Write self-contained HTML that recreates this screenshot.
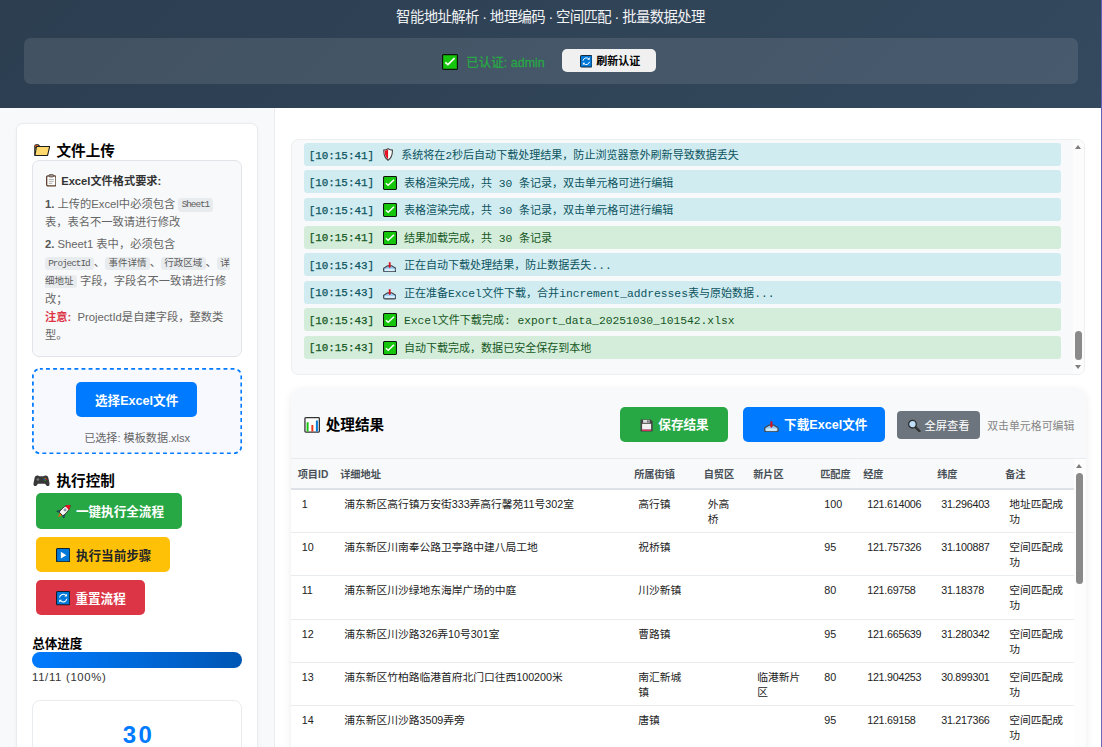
<!DOCTYPE html>
<html lang="zh-CN">
<head>
<meta charset="utf-8">
<title>智能地址解析</title>
<style>
*{box-sizing:border-box;margin:0;padding:0}
html,body{width:1102px;height:747px;overflow:hidden}
body{font-family:"Liberation Sans","Noto Sans CJK SC",sans-serif;background:linear-gradient(180deg,#6260ba,#7264b6);color:#333;position:relative}
.wrap{position:absolute;left:0;top:0;width:1100.8px;height:747px;background:#fff;overflow:hidden}
svg{display:inline-block;vertical-align:middle}
/* header */
.hdr{position:absolute;left:0;top:0;width:1101px;height:107.6px;background:linear-gradient(135deg,#2c3e50 0%,#34495e 100%);color:#fff}
.hdr .sub{position:absolute;left:0;width:1101px;top:7px;text-align:center;font-size:14.4px;line-height:20px;color:#f0f2f4;letter-spacing:-.6px}
.auth{position:absolute;left:24px;top:37.7px;width:1054px;height:46.4px;border-radius:6.5px;background:rgba(255,255,255,.1)}
.auth .ok{position:absolute;left:418px;top:16px}
.auth .txt{position:absolute;left:442.3px;top:16.3px;font-size:12.5px;line-height:18px;color:#28a745;white-space:nowrap;-webkit-text-stroke:.3px #28a745}
.auth .btn{position:absolute;left:537.6px;top:11.6px;width:94.8px;height:22.8px;border-radius:5px;background:#f0f0f0;color:#000;font-weight:bold;font-size:11px;line-height:24.8px;white-space:nowrap}
/* sidebar */
.side{position:absolute;left:0;top:108px;width:275px;height:639px;background:#f8f9fa;border-right:1px solid #e9ecef}
.card{position:absolute;left:16.4px;top:15.4px;width:242px;height:700px;background:#fff;border:1px solid #e9ecef;border-radius:7px;box-shadow:0 1px 4px rgba(0,0,0,.04)}
.h3{position:absolute;font-size:14.6px;font-weight:bold;color:#000;white-space:nowrap;line-height:20px}
.req{position:absolute;left:14px;top:35px;width:210.4px;height:197px;border:1px solid #e1e5ea;border-radius:7px;background:#f8f9fa;font-size:11.27px;color:#666;line-height:18.3px}
.req p{position:absolute;left:12px;white-space:nowrap}
.req b{color:#555}
.req code{font-family:"Liberation Mono","Noto Sans CJK SC",monospace;font-size:9.5px;background:#e9ecef;border-radius:3px;padding:.9px 3.3px 1.5px;color:#5c5c5c;position:relative;top:-.8px}
.req code.l{font-size:9.4px;letter-spacing:-1.04px;padding-right:4.3px}
.upl{position:absolute;left:14.2px;top:243px;width:210.2px;height:86.2px;padding:2px}
.upl .in{position:absolute;left:2px;top:2px;width:206.2px;height:82.2px}
.upl .b{position:absolute;left:41.8px;top:12px;width:121.4px;height:35px;border-radius:5px;background:#007bff;color:#fff;font-weight:bold;font-size:12.6px;line-height:39px;text-align:center;white-space:nowrap}
.upl .f{position:absolute;left:0;width:206px;top:59.6px;text-align:center;font-size:11.1px;line-height:16px;color:#666;white-space:nowrap}
.cb{position:absolute;left:18px;height:35.4px;border-radius:5px;color:#fff;font-weight:bold;font-size:12.6px;line-height:35.4px;white-space:nowrap}
.cb span{position:absolute;top:1.9px}
.pl{position:absolute;left:14.2px;top:510.4px;font-size:12.55px;font-weight:bold;color:#000;line-height:18px}
.pb{position:absolute;left:14.2px;top:526.8px;width:210.2px;height:16px;border-radius:8px;background:linear-gradient(90deg,#007bff,#0056b3)}
.pt{position:absolute;left:14px;top:543px;font-size:11.3px;line-height:18px;color:#333;letter-spacing:.7px}
.stat{position:absolute;left:14.4px;top:575px;width:210px;height:90px;border:1px solid #e9ecef;border-radius:8px;background:#fff;text-align:center}
.stat .n{position:absolute;left:0;width:208px;top:17.8px;font-size:24px;font-weight:bold;color:#007bff;line-height:32px;letter-spacing:2.4px;padding-left:2.4px}
/* main */
.logp{position:absolute;left:291.2px;top:139.2px;width:794.2px;height:235.4px;background:#f8f9fa;border:1px solid #eceff2;border-radius:7px;overflow:hidden}
.sb{position:absolute;background:#fcfcfc}
.sb i{position:absolute;display:block}
.sb .u{left:1.8px;width:0;height:0;border-left:3.8px solid transparent;border-right:3.8px solid transparent;border-bottom:4.2px solid #7d7d7d}
.sb .d{left:1.8px;width:0;height:0;border-left:3.8px solid transparent;border-right:3.8px solid transparent;border-top:4.2px solid #7d7d7d}
.sb .t{left:2.2px;width:7px;border-radius:3.5px;background:#8a8a8a}
.li{position:absolute;left:11.7px;width:757.5px;height:23px;border-radius:3px;background:#d1ecf1;color:#0c5460;font-family:"Liberation Mono","Noto Sans CJK SC",monospace;font-size:11px;line-height:22.8px;white-space:nowrap}
.li.s{background:#d4edda;color:#155724}
.li span{position:absolute;top:2.3px}
.li .ts{left:4.8px;font-size:10.9px;top:1.7px;-webkit-text-stroke:.25px currentColor}
.li .ic{left:78.8px}
.li .tx{font-size:11.04px}
.li i{font-style:normal;font-size:11.3px}
.res{position:absolute;left:291.2px;top:389.3px;width:794.4px;height:380px;background:#fff;border-radius:10px;box-shadow:0 1px 8px rgba(0,0,0,.08);overflow:hidden}
.rh{position:absolute;left:0;top:0;width:796px;height:69.9px;background:#f8f9fa;border-bottom:1px solid #e9ecef}
.rb{position:absolute;top:16.6px;height:35.3px;border-radius:5px;color:#fff;font-weight:bold;font-size:12.6px;line-height:35.3px;white-space:nowrap}
.rb span{position:absolute;top:.7px}
table{position:absolute;left:0;top:69.9px;width:782.6px;border-collapse:collapse;table-layout:fixed;font-size:10.75px;color:#222}
th{height:29.4px;background:#f8f9fa;border-bottom:2px solid #dee2e6;text-align:left;font-weight:bold;font-size:10.2px;color:#495057;padding:0 0 0 6.5px;white-space:nowrap}
td{height:43.2px;border-bottom:1px solid #e9ecef;vertical-align:top;padding:7px 6px 0 10.5px;line-height:15px}
.r1 td{height:44.2px}
.n{letter-spacing:-.27px}
</style>
</head>
<body>
<div class="wrap">
<div class="hdr">
  <div class="sub">智能地址解析 · 地理编码 · 空间匹配 · 批量数据处理</div>
  <div class="auth">
    <svg width="16" height="16" viewBox="0 0 16 16" style="position:absolute;left:418px;top:16px"><rect x=".6" y=".6" width="14.8" height="14.8" rx="1" fill="#16c60c" stroke="#0d160d" stroke-width="1.2"/><path d="M3.3 8.3 5.9 10.6 12.6 4.2" fill="none" stroke="#fff" stroke-width="1.7"/></svg><span class="txt">已认证: admin</span>
    <div class="btn"><svg width="12.5" height="12.5" viewBox="0 0 16 16" style="position:absolute;left:18.4px;top:6.1px"><rect x=".6" y=".6" width="14.8" height="14.8" rx="1" fill="#0078d7" stroke="#10202e" stroke-width="1.2"/><path d="M3.9 7.3a4.2 4.2 0 0 1 7.3-2.2" fill="none" stroke="#fff" stroke-width="1.25"/><path d="M12.4 3v3.1H9.3z" fill="#fff"/><path d="M12.1 8.7a4.2 4.2 0 0 1-7.3 2.2" fill="none" stroke="#fff" stroke-width="1.25"/><path d="M3.6 13V9.9h3.1z" fill="#fff"/></svg><span style="position:absolute;left:34.6px">刷新认证</span></div>
  </div>
</div>
<div class="side">
  <div class="card"><div style="position:absolute;left:.6px;top:.6px;width:240px;height:700px">
    <svg width="16.4" height="12.4" viewBox="0 0 16.6 12.5" style="position:absolute;left:16.1px;top:19.5px"><path d="M.8 11.5V2.1Q.8 .8 2.1 .8H4.3L5.6 2.2V4H1.2" fill="#efa92f" stroke="#1c1c1c" stroke-width="1.1" stroke-linejoin="round"/><path d="M1.5 1.3h2.2l-2.2 1.6z" fill="#e8342a"/><path d="M.9 11.7 2.5 2.5H15.9L13.7 11.7z" fill="#ffd86e" stroke="#1c1c1c" stroke-width="1.1" stroke-linejoin="round"/></svg><div class="h3" style="left:38.5px;top:16px">文件上传</div>
    <div class="req">
      <svg width="10.6" height="12.7" viewBox="0 0 11 13" style="position:absolute;left:12.8px;top:13.5px"><rect x=".7" y="1.9" width="9.6" height="10.4" rx="1.2" fill="#fdfdfd" stroke="#5a3d2b" stroke-width="1.3"/><rect x="3.2" y=".5" width="4.6" height="2.5" rx=".9" fill="#9a9a9a" stroke="#5a3d2b" stroke-width=".8"/><path d="M2.9 5.6H8.1M2.9 7.6H8.1M2.9 9.6H6.5" stroke="#9a9a9a" stroke-width=".8"/></svg><p style="top:10.6px;color:#333;font-weight:bold;left:28.2px;font-size:11.2px;margin-top:.5px">Excel文件格式要求:</p>
      <p style="top:34.1px"><b>1.</b> 上传的Excel中必须包含 <code class="l">Sheet1</code></p>
      <p style="top:52.4px">表，表名不一致请进行修改</p>
      <p style="top:74.1px"><b>2.</b> Sheet1 表中，必须包含</p>
      <p style="top:92.4px"><code class="l">ProjectId</code>、<code>事件详情</code>、<code>行政区域</code>、<code style="padding-right:0;border-radius:3px 0 0 3px">详</code></p>
      <p style="top:110.6px"><code style="padding-left:0;border-radius:0 3px 3px 0">细地址</code> 字段，字段名不一致请进行修</p>
      <p style="top:128.9px">改；</p>
      <p style="top:147.1px"><b style="color:#dc3545;margin-right:3px">注意:</b> ProjectId是自建字段，整数类</p>
      <p style="top:165.4px">型。</p>
    </div>
    <div class="upl"><svg width="210.2" height="86.2" viewBox="0 0 210.2 86.2" style="position:absolute;left:0;top:0"><rect x=".9" y=".9" width="208.4" height="84.4" rx="7" fill="#f8f9ff" stroke="#007bff" stroke-width="1.75" stroke-dasharray="3.9 3.2" stroke-dashoffset="1"/></svg><div class="in"><div class="b">选择Excel文件</div><div class="f">已选择: 模板数据.xlsx</div></div></div>
    <svg width="17" height="11.8" viewBox="0 0 17 12" style="position:absolute;left:15.5px;top:349.6px"><path d="M4.2 .6C2.6 .6 1.7 1.9 1.3 3.7L.4 8.5C.1 10.3 .9 11.4 2 11.4 3.2 11.4 3.8 10.4 4.8 8.8H12.2C13.2 10.4 13.8 11.4 15 11.4 16.1 11.4 16.9 10.3 16.6 8.5L15.7 3.7C15.3 1.9 14.4 .6 12.8 .6 11.8 .6 11.4 1.3 10.4 1.3H6.6C5.6 1.3 5.2 .6 4.2 .6Z" fill="#383838"/><circle cx="4.9" cy="4.6" r="1.3" fill="#777"/><circle cx="12.2" cy="3.4" r=".6" fill="#ffb900"/><circle cx="11.1" cy="4.5" r=".6" fill="#0078d7"/><circle cx="13.3" cy="4.5" r=".6" fill="#e81123"/><circle cx="12.2" cy="5.6" r=".6" fill="#16c60c"/></svg><div class="h3" style="left:38.5px;top:346px">执行控制</div>
    <div class="cb" style="top:368.3px;width:146.3px;background:#28a745"><svg width="14.8" height="13.6" viewBox="0 0 15 14" style="position:absolute;left:19.8px;top:11.5px"><g transform="translate(7.9 6.4) rotate(45) scale(1.18)"><path d="M-1.4 3.2 0 7.4 1.4 3.2Z" fill="#f7630c"/><path d="M-2.2 .3-4.3 4.4-2 3.4ZM2.2 .3 4.3 4.4 2 3.4Z" fill="#0078d7" stroke="#222" stroke-width=".5"/><path d="M0-8C2.6-5.3 2.9-1.5 2.3 3.4H-2.3C-2.9-1.5-2.6-5.3 0-8Z" fill="#f4f4f4" stroke="#222" stroke-width=".7"/><path d="M0-8C1.3-6.6 2-5.4 2.4-4H-2.4C-2-5.4-1.3-6.6 0-8Z" fill="#e81123"/><circle cx="0" cy="-1.6" r="1" fill="#8fb8de" stroke="#555" stroke-width=".4"/></g></svg><span style="left:39.9px">一键执行全流程</span></div>
    <div class="cb" style="top:411.8px;width:133.9px;background:#ffc107;color:#212529"><svg width="14.3" height="14.3" viewBox="0 0 16 16" style="position:absolute;left:20px;top:11.2px"><rect x=".6" y=".6" width="14.8" height="14.8" rx="1" fill="#0078d7" stroke="#10202e" stroke-width="1.2"/><path d="M5.4 4.3 11.6 8 5.4 11.7z" fill="#fff"/></svg><span style="left:39.9px">执行当前步骤</span></div>
    <div class="cb" style="top:455.1px;width:108.9px;background:#dc3545"><svg width="14.3" height="14.3" viewBox="0 0 16 16" style="position:absolute;left:20px;top:11.2px"><rect x=".6" y=".6" width="14.8" height="14.8" rx="1" fill="#0078d7" stroke="#10202e" stroke-width="1.2"/><path d="M3.9 7.3a4.2 4.2 0 0 1 7.3-2.2" fill="none" stroke="#fff" stroke-width="1.25"/><path d="M12.4 3v3.1H9.3z" fill="#fff"/><path d="M12.1 8.7a4.2 4.2 0 0 1-7.3 2.2" fill="none" stroke="#fff" stroke-width="1.25"/><path d="M3.6 13V9.9h3.1z" fill="#fff"/></svg><span style="left:39.4px">重置流程</span></div>
    <div class="pl">总体进度</div>
    <div class="pb"></div>
    <div class="pt">11/11 (100%)</div>
    <div class="stat"><div class="n">30</div></div>
  </div></div>
</div>
<div class="logp">
<div class="sb" style="left:780.8px;top:0;width:11.5px;height:234px"><i class="u" style="top:4.5px"></i><i class="t" style="top:190.8px;height:29.5px"></i><i class="d" style="top:224.8px"></i></div>
<div class="li" style="top:2.70px"><span class="ts">[10:15:41]</span><svg width="10.2" height="13" viewBox="0 0 10 13" style="position:absolute;left:79px;top:5.4px"><path d="M5 .7C6.5 1.6 8 2 9.3 2.1 9.5 6.5 8 10.2 5 12.3 2 10.2 .5 6.5 .7 2.1 2 2 3.5 1.6 5 .7Z" fill="#fff" stroke="#444" stroke-width="1.1"/><path d="M5 1.5C3.8 2.2 2.7 2.5 1.5 2.7 1.4 6.3 2.6 9.4 5 11.3Z" fill="#e81123"/></svg><span class="tx" style="left:97.4px">系统将在2秒后自动下载处理结果，防止浏览器意外刷新导致数据丢失</span></div>
<div class="li" style="top:30.25px"><span class="ts">[10:15:41]</span><svg width="14" height="14" viewBox="0 0 16 16" style="position:absolute;left:78.8px;top:5.2px"><rect x=".6" y=".6" width="14.8" height="14.8" rx="1" fill="#16c60c" stroke="#0d160d" stroke-width="1.2"/><path d="M3.3 8.3 5.9 10.6 12.6 4.2" fill="none" stroke="#fff" stroke-width="1.7"/></svg><span class="tx" style="left:100px">表格渲染完成，共 <i>30</i> 条记录，双击单元格可进行编辑</span></div>
<div class="li" style="top:57.80px"><span class="ts">[10:15:41]</span><svg width="14" height="14" viewBox="0 0 16 16" style="position:absolute;left:78.8px;top:5.2px"><rect x=".6" y=".6" width="14.8" height="14.8" rx="1" fill="#16c60c" stroke="#0d160d" stroke-width="1.2"/><path d="M3.3 8.3 5.9 10.6 12.6 4.2" fill="none" stroke="#fff" stroke-width="1.7"/></svg><span class="tx" style="left:100px">表格渲染完成，共 <i>30</i> 条记录，双击单元格可进行编辑</span></div>
<div class="li s" style="top:85.35px"><span class="ts">[10:15:41]</span><svg width="14" height="14" viewBox="0 0 16 16" style="position:absolute;left:78.8px;top:5.2px"><rect x=".6" y=".6" width="14.8" height="14.8" rx="1" fill="#16c60c" stroke="#0d160d" stroke-width="1.2"/><path d="M3.3 8.3 5.9 10.6 12.6 4.2" fill="none" stroke="#fff" stroke-width="1.7"/></svg><span class="tx" style="left:100px">结果加载完成，共 <i>30</i> 条记录</span></div>
<div class="li" style="top:112.90px"><span class="ts">[10:15:43]</span><svg width="13.4" height="10.4" viewBox="0 0 13.3 10.3" style="position:absolute;left:79px;top:8.8px"><path d="M4.7 3.7.6 6.2V8.4Q.6 9.8 2 9.8H11.3Q12.7 9.8 12.7 8.4V6.2L8.6 3.7Z" fill="#8fc8f2" stroke="#444" stroke-width="1.05"/><rect x="1.7" y="6.8" width="9.9" height="2.1" rx="1" fill="#d9eefc"/><path d="M5.75.2h1.8v4.1h.6L6.65 6.3 5.15 4.3h.6z" fill="#d9101f"/></svg><span class="tx" style="left:100px">正在自动下载处理结果，防止数据丢失<i>...</i></span></div>
<div class="li" style="top:140.45px"><span class="ts">[10:15:43]</span><svg width="13.4" height="10.4" viewBox="0 0 13.3 10.3" style="position:absolute;left:79px;top:8.8px"><path d="M4.7 3.7.6 6.2V8.4Q.6 9.8 2 9.8H11.3Q12.7 9.8 12.7 8.4V6.2L8.6 3.7Z" fill="#8fc8f2" stroke="#444" stroke-width="1.05"/><rect x="1.7" y="6.8" width="9.9" height="2.1" rx="1" fill="#d9eefc"/><path d="M5.75.2h1.8v4.1h.6L6.65 6.3 5.15 4.3h.6z" fill="#d9101f"/></svg><span class="tx" style="left:100px">正在准备<i>Excel</i>文件下载，合并<i>increment_addresses</i>表与原始数据<i>...</i></span></div>
<div class="li s" style="top:168.00px"><span class="ts">[10:15:43]</span><svg width="14" height="14" viewBox="0 0 16 16" style="position:absolute;left:78.8px;top:5.2px"><rect x=".6" y=".6" width="14.8" height="14.8" rx="1" fill="#16c60c" stroke="#0d160d" stroke-width="1.2"/><path d="M3.3 8.3 5.9 10.6 12.6 4.2" fill="none" stroke="#fff" stroke-width="1.7"/></svg><span class="tx" style="left:100px"><i>Excel</i>文件下载完成<i>: export_data_20251030_101542.xlsx</i></span></div>
<div class="li s" style="top:195.55px"><span class="ts">[10:15:43]</span><svg width="14" height="14" viewBox="0 0 16 16" style="position:absolute;left:78.8px;top:5.2px"><rect x=".6" y=".6" width="14.8" height="14.8" rx="1" fill="#16c60c" stroke="#0d160d" stroke-width="1.2"/><path d="M3.3 8.3 5.9 10.6 12.6 4.2" fill="none" stroke="#fff" stroke-width="1.7"/></svg><span class="tx" style="left:100px">自动下载完成，数据已安全保存到本地</span></div>
</div>
<div class="res">
  <div class="rh"><div style="position:absolute;left:0;top:1.1px;width:796px;height:68px">
    <svg width="16.3" height="15.8" viewBox="0 0 16 16" style="position:absolute;left:13px;top:27px"><rect x=".7" y=".7" width="14.6" height="14.6" rx=".8" fill="#fff" stroke="#333" stroke-width="1.3"/><path d="M3.4 5.4V14.6" stroke="#16c60c" stroke-width="2"/><path d="M8.2 8.2V14.6" stroke="#f03a17" stroke-width="2"/><path d="M12.8 3.6V14.6" stroke="#0078d7" stroke-width="2"/></svg><div class="h3" style="left:34.5px;top:25px">处理结果</div>
    <div class="rb" style="left:328.6px;width:108px;background:#28a745"><svg width="13.2" height="13" viewBox="0 0 13 13" style="position:absolute;left:20.1px;top:12.2px"><path d="M1.2.4H10.6L12.6 2.4V11.8Q12.6 12.6 11.8 12.6H1.2Q.4 12.6 .4 11.8V1.2Q.4.4 1.2.4Z" fill="#444"/><rect x="2" y="4.8" width="9" height="5.8" fill="#f2f2f2"/><rect x="2" y="10.6" width="9" height="1.3" fill="#e3336b"/><rect x="3" y=".9" width="6.4" height="2.9" fill="#ddd"/><rect x="7.1" y="1.3" width="1.4" height="2.1" fill="#555"/></svg><span style="left:38.5px">保存结果</span></div>
    <div class="rb" style="left:452px;width:141.9px;background:#007bff"><svg width="14.8" height="11.4" viewBox="0 0 13.3 10.3" style="position:absolute;left:20.8px;top:13.8px"><path d="M4.7 3.7.6 6.2V8.4Q.6 9.8 2 9.8H11.3Q12.7 9.8 12.7 8.4V6.2L8.6 3.7Z" fill="#8fc8f2" stroke="#444" stroke-width="1.05"/><rect x="1.7" y="6.8" width="9.9" height="2.1" rx="1" fill="#d9eefc"/><path d="M5.75.2h1.8v4.1h.6L6.65 6.3 5.15 4.3h.6z" fill="#d9101f"/></svg><span style="left:40.9px">下载Excel文件</span></div>
    <div class="rb" style="left:605.6px;top:20.5px;width:83.4px;height:28.2px;line-height:28.2px;background:#6c757d;font-size:11.3px;font-weight:normal;border-radius:4px"><svg width="14" height="13.4" viewBox="0 0 13 13" style="position:absolute;left:10.2px;top:8.2px"><path d="M7.9 7.9 11.8 11.8" stroke="#333" stroke-width="2.3" stroke-linecap="round"/><circle cx="5" cy="5" r="3.7" fill="#bfe0fa" stroke="#2b2b2b" stroke-width="1.3"/></svg><span style="left:27.6px;top:.9px">全屏查看</span></div>
    <div style="position:absolute;left:696px;top:27.2px;font-size:10.9px;line-height:16px;color:#868686;white-space:nowrap">双击单元格可编辑</div>
  </div></div>
<div class="sb" style="left:782.6px;top:69.9px;width:12.8px;height:320px;background:#fdfdfd"><i class="u" style="top:5px;left:2.6px"></i><i class="t" style="top:13.9px;height:111.4px;left:2.4px"></i></div>
  <table>
    <colgroup><col style="width:42.5px"><col style="width:294px"><col style="width:69.5px"><col style="width:49.5px"><col style="width:67px"><col style="width:43px"><col style="width:74px"><col style="width:68px"><col></colgroup>
    <tr><th>项目ID</th><th>详细地址</th><th>所属街镇</th><th>自贸区</th><th>新片区</th><th>匹配度</th><th style="box-shadow:inset 1px 0 0 rgba(255,255,255,.45)">经度</th><th>纬度</th><th>备注</th></tr>
    <tr class="r1"><td>1</td><td>浦东新区高行镇万安街333弄高行馨苑11号302室</td><td>高行镇</td><td>外高<br>桥</td><td></td><td>100</td><td class="n">121.614006</td><td class="n">31.296403</td><td>地址匹配成功</td></tr>
    <tr><td>10</td><td>浦东新区川南奉公路卫亭路中建八局工地</td><td>祝桥镇</td><td></td><td></td><td>95</td><td class="n">121.757326</td><td class="n">31.100887</td><td>空间匹配成功</td></tr>
    <tr><td>11</td><td>浦东新区川沙绿地东海岸广场的中庭</td><td>川沙新镇</td><td></td><td></td><td>80</td><td class="n">121.69758</td><td class="n">31.18378</td><td>空间匹配成功</td></tr>
    <tr><td>12</td><td>浦东新区川沙路326弄10号301室</td><td>曹路镇</td><td></td><td></td><td>95</td><td class="n">121.665639</td><td class="n">31.280342</td><td>空间匹配成功</td></tr>
    <tr><td>13</td><td>浦东新区竹柏路临港首府北门口往西100200米</td><td>南汇新城镇</td><td></td><td>临港新片区</td><td>80</td><td class="n">121.904253</td><td class="n">30.899301</td><td>空间匹配成功</td></tr>
    <tr><td>14</td><td>浦东新区川沙路3509弄旁</td><td>唐镇</td><td></td><td></td><td>95</td><td class="n">121.69158</td><td class="n">31.217366</td><td>空间匹配成功</td></tr>
  </table>
</div>
</div>
</body>
</html>
